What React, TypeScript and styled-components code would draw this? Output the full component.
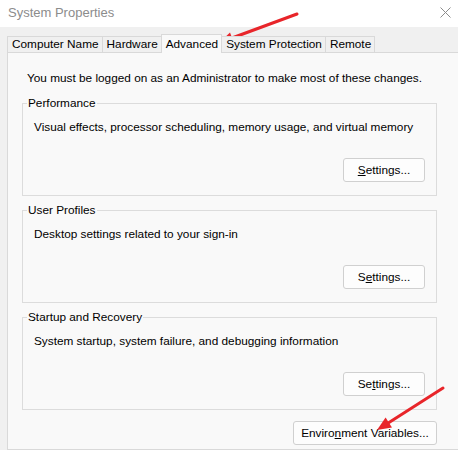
import styled, { createGlobalStyle } from "styled-components";

const GlobalStyle = createGlobalStyle`
  html, body {
    margin: 0;
    padding: 0;
    background: #f0f0f0;
  }
  body {
    font-family: "Segoe UI", "Liberation Sans", Arial, sans-serif;
    font-size: 11.8px;
    color: #000;
  }
`;

// window frame
const Window = styled.div`
  position: relative;
  width: 458px;
  height: 450px;
  overflow: hidden;
  display: flex;
  flex-direction: column;
  background: #f0f0f0;
`;

const TitleBar = styled.div`
  height: 27px;
  flex: none;
  background: #ffffff;
  display: flex;
  align-items: center;
  justify-content: space-between;
  padding: 0 7px 3px 8px;
  box-sizing: border-box;
`;

const Title = styled.span`
  font-size: 13px;
  color: #8c8c8c;
`;

const Body = styled.div`
  flex: 1;
  display: flex;
  flex-direction: column;
  padding: 6px 0 0 7px;
`;

// tabs
const TabStrip = styled.div`
  display: flex;
  align-items: flex-end;
  height: 19px;
  padding-left: 1px;
`;

const Tab = styled.div<{ $active?: boolean }>`
  height: ${(p) => (p.$active ? "19px" : "16px")};
  line-height: ${(p) => (p.$active ? "18px" : "15px")};
  padding: 0 3px 0 4px;
  box-sizing: border-box;
  border: 1px solid #d9d9d9;
  border-bottom: none;
  margin-left: -1px;
  background: ${(p) => (p.$active ? "#f9f9f9" : "#f0f0f0")};
  position: relative;
  z-index: ${(p) => (p.$active ? 2 : 1)};
  margin-bottom: ${(p) => (p.$active ? "-1px" : "0")};
  white-space: nowrap;
`;

const Panel = styled.div`
  flex: 1;
  background: #f9f9f9;
  border: 1px solid #d9d9d9;
  margin-right: -10px;
  padding: 0 0 0 14px;
  display: flex;
  flex-direction: column;
`;

const Note = styled.p`
  margin: 17px 0 10px 5px;
  line-height: 16px;
`;

const Group = styled.fieldset`
  width: 415px;
  box-sizing: border-box;
  margin: 0 0 7px 0;
  padding: 0 11px 13px 11px;
  border: 1px solid #dcdcdc;
  min-width: 0;
`;

const Legend = styled.legend`
  padding: 0 1px;
  margin-left: -7px;
  line-height: 15px;
`;

const Content = styled.div`
  height: 71px;
  display: flex;
  flex-direction: column;
  justify-content: space-between;
`;

const Desc = styled.div`
  margin-top: 8px;
  line-height: 16px;
`;

const Button = styled.button<{ $wide?: boolean }>`
  align-self: flex-end;
  width: ${(p) => (p.$wide ? "144px" : "82px")};
  height: 24px;
  font: inherit;
  color: #000;
  background: #fdfdfd;
  border: 1px solid #d0d0d0;
  border-radius: 3px;
  padding: 0;
  u {
    text-decoration: underline;
  }
`;

const Footer = styled.div`
  display: flex;
  justify-content: flex-end;
  width: 415px;
  margin-top: 4px;
`;

const Overlay = styled.svg`
  position: absolute;
  left: 0;
  top: 0;
  pointer-events: none;
`;

function App() {
  return (
    <Window>
      <GlobalStyle />
      <TitleBar>
        <Title>System Properties</Title>
        <svg width="11" height="11" viewBox="0 0 11 11">
          <path d="M0.5 0.5 L10.5 10.5 M10.5 0.5 L0.5 10.5" stroke="#8c8c8c" strokeWidth="1" />
        </svg>
      </TitleBar>
      <Body>
        <TabStrip>
          <Tab>Computer Name</Tab>
          <Tab>Hardware</Tab>
          <Tab $active>Advanced</Tab>
          <Tab>System Protection</Tab>
          <Tab>Remote</Tab>
        </TabStrip>
        <Panel>
          <Note>You must be logged on as an Administrator to make most of these changes.</Note>
          <Group>
            <Legend>Performance</Legend>
            <Content>
              <Desc>Visual effects, processor scheduling, memory usage, and virtual memory</Desc>
              <Button>
                <u>S</u>ettings...
              </Button>
            </Content>
          </Group>
          <Group>
            <Legend>User Profiles</Legend>
            <Content>
              <Desc>Desktop settings related to your sign-in</Desc>
              <Button>
                S<u>e</u>ttings...
              </Button>
            </Content>
          </Group>
          <Group>
            <Legend>Startup and Recovery</Legend>
            <Content>
              <Desc>System startup, system failure, and debugging information</Desc>
              <Button>
                Se<u>t</u>tings...
              </Button>
            </Content>
          </Group>
          <Footer>
            <Button $wide>
              Enviro<u>n</u>ment Variables...
            </Button>
          </Footer>
        </Panel>
      </Body>
      {/* red annotation arrows */}
      <Overlay width="458" height="450">
        <line x1="297" y1="14" x2="232" y2="38" stroke="#e8252a" strokeWidth="3" strokeLinecap="round" />
        <polygon points="219,43 234.2,43.7 230,32.5" fill="#e8252a" />
        <line x1="443" y1="388" x2="389" y2="422.5" stroke="#e8252a" strokeWidth="3" strokeLinecap="round" />
        <polygon points="377,430 392,427.6 385.6,417.4" fill="#e8252a" />
      </Overlay>
    </Window>
  );
}

export default App;
